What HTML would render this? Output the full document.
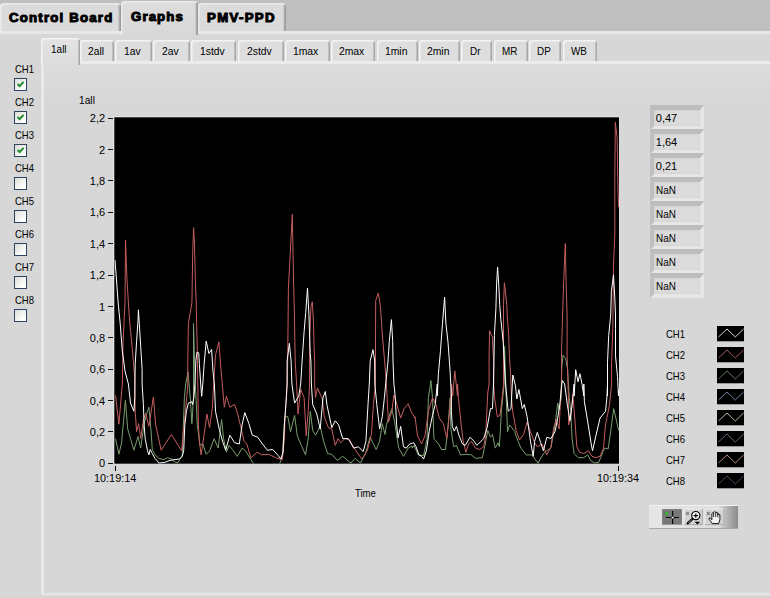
<!DOCTYPE html>
<html><head><meta charset="utf-8"><title>Graphs</title>
<style>
html,body{margin:0;padding:0}
body{width:770px;height:598px;overflow:hidden;background:#bfbfbf;position:relative;font-family:"Liberation Sans",sans-serif;font-size:11px;color:#000}
div,svg,span{position:absolute;box-sizing:border-box}
.t{white-space:nowrap;line-height:13px;height:13px;transform-origin:0 0;font-size:11px}
.b{white-space:nowrap;line-height:17px;height:17px;transform-origin:0 0;font-size:12px;font-weight:bold;-webkit-text-stroke:1px #000;z-index:5}
.ot{top:3px;height:29px;background:#dbdbdb;border-radius:4px 4px 0 0;box-shadow:inset 1px 1px 0 #e9e9e9,inset 2px 2px 0 #e4e4e4,inset -1px 0 0 #9c9c9c,inset -2px 0 0 #adadad,inset -3px 0 0 #c8c8c8}
.ot.sel{top:0.5px;height:34.5px;background:linear-gradient(#dedede,#d8d8d8);z-index:3}
#outer{left:0;top:31px;width:790px;height:600px;background:#d7d7d7;border-top:3px solid #e7e7e7;}
.it{top:40px;height:22px;background:#dedede;border-radius:3px 3px 0 0;box-shadow:inset 1px 1px 0 #f3f3f3,inset 2px 2px 0 #e9e9e9,inset -1px 0 0 #a8a8a8,inset -2px 0 0 #bebebe}
.it.sel{top:37.5px;height:27px;left:40.5px;width:39px;background:linear-gradient(#e3e3e3,#dcdcdc);z-index:3}
#inner{left:40.5px;top:61px;width:760px;height:532.5px;background:linear-gradient(#dcdcdc,#d7d7d7 40px);border-top:3px solid #ececec;border-left:3.5px solid #e9e9e9}
#ib{left:42px;top:593px;width:740px;height:6px;background:linear-gradient(#e7e7e7 0,#e4e4e4 2px,#d4d4d4 3px)}
.cb{width:13px;height:13px;border:1px solid #2c4562;background:linear-gradient(135deg,#dcdcd6,#fff 80%)}
.cb svg{left:0;top:0}
.ind{left:650px;width:54px;height:25px;background:#dbdbdb;border:solid;border-width:5px 4px 4px 4px;border-color:#bcbcbc #e6e6e6 #e6e6e6 #c0c0c0;box-shadow:inset 0 0 0 0.5px #d0d0d0}
.lg{left:716.5px}
.tk{left:108px;width:5px;height:1px;background:#111}
</style></head><body>
<div class="ot" style="left:0;width:121px"></div>
<div class="ot sel" style="left:121px;width:77px"></div>
<div class="ot" style="left:198px;width:88px"></div>
<span class="b" style="left:8.60px;top:9.70px;letter-spacing:1.10px;transform:scaleX(1.1);">Control Board</span>
<span class="b" style="left:131.10px;top:8.50px;letter-spacing:1.02px;transform:scaleX(1.1);">Graphs</span>
<span class="b" style="left:207.00px;top:9.70px;letter-spacing:1.22px;transform:scaleX(1.1);">PMV-PPD</span>
<div id="outer"></div>
<span class="t" style="left:14.90px;top:62.80px;transform:scaleX(0.865);">CH1</span><div class="cb" style="left:14px;top:78px"><svg width="11" height="11" viewBox="0 0 11 11"><path d="M2.6 5 L4.6 7.1 L8.6 2.9" fill="none" stroke="#208a2c" stroke-width="2.1"/></svg></div><span class="t" style="left:14.90px;top:95.80px;transform:scaleX(0.865);">CH2</span><div class="cb" style="left:14px;top:111px"><svg width="11" height="11" viewBox="0 0 11 11"><path d="M2.6 5 L4.6 7.1 L8.6 2.9" fill="none" stroke="#208a2c" stroke-width="2.1"/></svg></div><span class="t" style="left:14.90px;top:128.80px;transform:scaleX(0.865);">CH3</span><div class="cb" style="left:14px;top:144px"><svg width="11" height="11" viewBox="0 0 11 11"><path d="M2.6 5 L4.6 7.1 L8.6 2.9" fill="none" stroke="#208a2c" stroke-width="2.1"/></svg></div><span class="t" style="left:14.90px;top:161.80px;transform:scaleX(0.865);">CH4</span><div class="cb" style="left:14px;top:177px"></div><span class="t" style="left:14.90px;top:194.80px;transform:scaleX(0.865);">CH5</span><div class="cb" style="left:14px;top:210px"></div><span class="t" style="left:14.90px;top:227.80px;transform:scaleX(0.865);">CH6</span><div class="cb" style="left:14px;top:243px"></div><span class="t" style="left:14.90px;top:260.80px;transform:scaleX(0.865);">CH7</span><div class="cb" style="left:14px;top:276px"></div><span class="t" style="left:14.90px;top:293.80px;transform:scaleX(0.865);">CH8</span><div class="cb" style="left:14px;top:309px"></div>
<div class="it" style="left:80px;width:34px"></div><span class="t" style="left:88.36px;top:45.00px;transform:scaleX(0.940);">2all</span><div class="it" style="left:115px;width:36.5px"></div><span class="t" style="left:123.88px;top:45.00px;transform:scaleX(0.940);">1av</span><div class="it" style="left:152.5px;width:37.5px"></div><span class="t" style="left:161.88px;top:45.00px;transform:scaleX(0.940);">2av</span><div class="it" style="left:190.5px;width:45.5px"></div><span class="t" style="left:199.86px;top:45.00px;transform:scaleX(0.940);">1stdv</span><div class="it" style="left:237.5px;width:46.0px"></div><span class="t" style="left:247.11px;top:45.00px;transform:scaleX(0.940);">2stdv</span><div class="it" style="left:284.5px;width:45.0px"></div><span class="t" style="left:293.32px;top:45.00px;transform:scaleX(0.940);">1max</span><div class="it" style="left:330.5px;width:44.5px"></div><span class="t" style="left:339.07px;top:45.00px;transform:scaleX(0.940);">2max</span><div class="it" style="left:376.5px;width:41.0px"></div><span class="t" style="left:385.05px;top:45.00px;transform:scaleX(0.940);">1min</span><div class="it" style="left:418.5px;width:41.0px"></div><span class="t" style="left:427.05px;top:45.00px;transform:scaleX(0.940);">2min</span><div class="it" style="left:461px;width:31px"></div><span class="t" style="left:470.33px;top:45.00px;transform:scaleX(0.900);">Dr</span><div class="it" style="left:493.5px;width:34.0px"></div><span class="t" style="left:501.98px;top:45.00px;transform:scaleX(0.900);">MR</span><div class="it" style="left:529px;width:32px"></div><span class="t" style="left:537.48px;top:45.00px;transform:scaleX(0.900);">DP</span><div class="it" style="left:562.5px;width:34.5px"></div><span class="t" style="left:571.13px;top:45.00px;transform:scaleX(0.900);">WB</span>
<div id="inner"></div><div id="ib"></div>
<div class="it sel"></div>
<span class="t" style="left:50.80px;top:43.00px;transform:scaleX(0.911);z-index:4">1all</span>
<span class="t" style="left:79.20px;top:93.60px;transform:scaleX(0.929);">1all</span>
<span class="t" style="left:89.83px;top:112.40px;transform:scaleX(1.000);">2,2</span><div class="tk" style="top:118px"></div><span class="t" style="left:99.00px;top:143.76px;transform:scaleX(1.000);">2</span><div class="tk" style="top:149px"></div><span class="t" style="left:89.83px;top:175.12px;transform:scaleX(1.000);">1,8</span><div class="tk" style="top:180px"></div><span class="t" style="left:89.83px;top:206.48px;transform:scaleX(1.000);">1,6</span><div class="tk" style="top:212px"></div><span class="t" style="left:89.83px;top:237.84px;transform:scaleX(1.000);">1,4</span><div class="tk" style="top:243px"></div><span class="t" style="left:89.83px;top:269.20px;transform:scaleX(1.000);">1,2</span><div class="tk" style="top:275px"></div><span class="t" style="left:99.00px;top:300.56px;transform:scaleX(1.000);">1</span><div class="tk" style="top:306px"></div><span class="t" style="left:89.83px;top:331.92px;transform:scaleX(1.000);">0,8</span><div class="tk" style="top:337px"></div><span class="t" style="left:89.83px;top:363.28px;transform:scaleX(1.000);">0,6</span><div class="tk" style="top:369px"></div><span class="t" style="left:89.83px;top:394.64px;transform:scaleX(1.000);">0,4</span><div class="tk" style="top:400px"></div><span class="t" style="left:89.83px;top:426.00px;transform:scaleX(1.000);">0,2</span><div class="tk" style="top:431px"></div><span class="t" style="left:99.00px;top:457.36px;transform:scaleX(1.000);">0</span><div class="tk" style="top:463px"></div>
<svg style="left:0;top:0" width="770" height="598" viewBox="0 0 770 598">
<defs><clipPath id="pc"><rect x="114.3" y="117.3" width="504.7" height="346.4"/></clipPath></defs><rect x="113.3" y="116.3" width="506" height="347.6" fill="#e6e6e6"/>
<rect x="114.3" y="117.3" width="504.7" height="346.4" fill="#000"/>
<g fill="none" stroke-width="1" stroke-linejoin="round" clip-path="url(#pc)">
<polyline stroke="#7a9e6e" points="115.5,438.6 118.9,454.3 121.6,442.7 125.4,400.4 127.7,429 130.5,438.6 133.9,450.2 138,436.5 140.7,448.1 144.1,423.6 146.8,413.3 148.9,407.2 150.9,429 152.3,449.5 155,454.9 159.1,458.4 163.9,459.7 167.3,457.7 171.4,459 175.5,462.4 178.2,462.4 182.3,454.9 184.4,397.6 185.7,384 188,372 190.5,401.7 191.9,423.6 193.5,397.6 193.5,323.5 194.3,350.7 195.3,384 197.3,424.9 200,445.4 202.8,444 206.2,454.3 209.6,450.8 213.7,439.9 214.1,438.6 218.2,448.1 221.6,419.5 223.6,438.6 226.4,452.2 229.1,445.4 232.5,449.5 237.3,456.3 242.1,448.1 245.5,450.8 252.3,461.8 254.7,465 278.9,465 282.3,457.7 284.8,416.7 287.8,416.7 290.5,431.7 294.6,415.4 297.3,435.8 301.4,445.4 305.5,454.9 308.2,438.6 310.3,411.3 312.7,430.4 315.5,435.2 320.2,426.3 323.6,441.3 327.7,453.6 331.8,454.3 337.3,460.4 342.7,456.3 350.9,463.1 355,458.4 360.5,463.1 365.9,452.2 370,437.2 372.8,442.7 376.2,449.5 379.6,441.3 382.3,423.6 385,434.5 386.4,424.9 389.8,414 391.9,408.6 394.6,422.2 398.7,448.1 403.5,456.3 408.2,448.1 412.3,446.1 412.3,448.1 414.1,445.4 418.2,454.9 423.6,455.6 427.1,438.6 428.4,397.6 430.5,384 430.9,380.5 432.5,397.6 433.9,438.6 438.6,444 441.4,449.5 445.5,449.5 448.2,424.9 450.2,397.6 450.9,429 453.7,446.8 456.4,445.4 460.5,454.9 465.9,454.3 471.4,454.9 475.5,458.4 482.3,457.7 485,445.4 487.8,430.4 490.5,437.2 492.5,434.5 495.3,448.1 498,442.7 499.4,446.8 501.4,411.3 504.1,384 504.6,346.4 506.2,397.6 507.5,431.7 509.6,424.9 515,431.7 515,433.1 518.2,441.3 520.9,448.1 526.4,454.9 531.8,454.9 538,463.1 543.4,453.6 546.8,450.8 550.9,448.1 555,424.9 557.7,403.1 559.1,409.9 561.2,397.6 561.6,369.6 563,355.2 565.7,358.7 567.7,369.6 569.1,396 570.7,411.3 572.1,438.6 574.1,453.6 578.2,457.7 583.7,457.7 587.8,454.9 590.5,460.4 594.6,463.1 598.7,462.4 602.8,452.2 604.8,448.1 608.2,448.8 611,429 613.7,408.6 618.7,430.4"/>
<polyline stroke="#c45e60" points="115.5,395.6 118.9,424.2 122.3,384 123,343.9 124.3,316.6 125,303 125.5,240 126.9,277.6 128.4,303 129.8,323.5 132.5,350.7 134.6,376.7 135.2,411.3 136.6,431.7 138.6,423.6 140.7,438.6 143.4,419.5 145.7,413.3 148.9,426.3 153.4,397 155.7,424.9 161.2,450.2 171.4,434.5 181.6,450.8 184.4,422.2 187.1,393.5 187.8,384 187.8,357.6 188.4,323.5 191.9,303 192.8,248.9 193.6,227.7 194.5,243.8 195.3,277.6 196.2,303 197.3,350.7 198.4,424.9 199.4,441.3 201.1,454.9 204.1,434.5 206.9,414 209.6,427.7 212.3,408.6 213.7,384 215.5,354.8 218.9,341.9 220.9,368.5 222.3,384 222.3,384 224.3,407.2 226.4,396.3 229.8,407.2 234.6,404.5 237.3,412.6 240.7,426.3 244.1,441.3 246.8,444 250.9,457.7 257.1,452.2 261.8,454.9 268.7,454.3 275.5,457.7 282.3,459.7 284.4,438.6 285,418.1 287.1,384 287.7,361 288.4,288.2 292.3,214.3 293.5,280 294.3,307.3 295.2,361 296.6,384 298,414 300.7,389.5 304.1,397.6 306.2,435.8 308.2,411.3 309.6,384 309.6,343.9 310.9,307.3 312.3,301.8 313.4,320.9 314.3,353.7 314.7,361 314.7,384 315.5,397.6 317.5,388.1 322.3,399 324.3,416.7 328.4,427.7 331.8,429 335.2,445.4 338,438.6 340.7,442.7 344.8,438.6 349.6,439.9 355,449.5 361.8,459 367.3,450.8 371.4,434.5 373.4,404.5 375.5,384 375.5,334.6 375.7,300.5 378.4,293 380.5,307.3 382.5,337.3 384.6,361 386.4,384 388.4,422.2 391.9,411.3 393.9,394.9 397.3,405.8 400.7,418.1 404.1,408.6 408.2,403.8 411.6,412.6 415,418.1 415,416.7 417.5,435.8 421.6,444 425,435.8 428.4,411.3 432.5,397.6 435.9,404.5 439.3,418.1 443.4,423.6 446.8,438.6 449.6,411.3 451.6,384 452.7,396 454.8,370.9 457.5,396 457.5,384 458.4,397.6 461.2,424.9 463.2,441.3 465.9,452.2 468.7,444 471.4,441.3 475.5,448.1 479.6,449.5 483.7,446.8 485.7,435.8 487.8,392.2 489.1,384 489.1,355.9 489.6,330.7 492.3,336.8 493.7,362.7 493.7,384 494.6,397.6 497.3,416.7 500,415.4 502.1,397.6 503.5,384 503.5,328.6 503.5,304.6 504.4,282.7 505.8,295 506.8,304.6 507.5,320.9 508.5,331 508.7,335.5 509.4,355.9 510.7,376.4 511.4,396 512.7,411.3 516.1,430.4 519.5,439.9 523.6,434.5 527.1,422.2 530.5,431.7 534.6,442.7 537.3,446.8 542.1,444 546.8,454.9 550.9,446.8 553.7,427.7 556.4,419.5 559.1,429 560.8,394.9 561.6,384 561.6,349.1 562.6,315 563.7,281.7 565.3,243.5 566.1,281.7 567.1,315 567.1,355.9 567.7,376.4 568.4,396 568.4,411.3 568.7,424.9 571.4,411.3 572.8,394.9 574.8,418.1 576.8,446.8 579.6,452.2 583.7,453.6 588.4,450.8 591.9,456.3 595.9,457.7 600,456.3 603.5,448.1 605.5,424.9 609.6,404.5 611.6,384 611.6,362.7 612.8,328.6 613.5,265.4 614.8,234 614.8,180 615.3,122.3 617.1,137.3 618,191 618.7,207"/>
<polyline stroke="#ffffff" points="115,260 118.2,303 120.2,323.5 122.3,350.7 125,371.2 128.4,384 130.5,403.1 133.9,411.3 134.8,397.6 135.2,364.4 136.6,341.2 138,320.7 138.4,309.8 139.3,323.5 140.7,346.7 142.1,368.5 142.1,384 143.4,404.5 144.1,424.9 145.2,438.6 147.5,450.8 148.9,454.9 150.2,449.5 152.3,453.6 155,458.4 159.1,463.1 164.6,462.4 170,460.4 174.1,459.7 179.6,459 182.3,456.3 183.7,450.8 184.8,424.9 186.4,411.3 188.4,403.1 191.9,401.7 192.5,404.5 193.9,397.6 194.9,384 195.9,360.3 197,352.1 198.7,352.8 199.4,364.4 200.7,384 201.7,396.3 202.8,384 204.1,364.4 206.2,341.2 208.9,353.5 211.6,349.4 213,371.2 214.4,384 214.4,384 215.5,411.3 219.5,430.4 223,442.7 225.7,450.2 229.8,435.2 234.6,442.7 239.3,444 242.1,424.9 244.8,412.6 248.9,423.6 252.3,435.2 257.7,437.2 262.5,444 267.3,450.2 272.8,449.5 278.2,455.6 280.9,459 283,452.2 284.4,424.9 286.4,397.6 287.1,384 287.1,361 289.4,343.4 291.1,361 291.9,384 294.6,403.1 298.7,396.3 300.7,384 302.1,361 304.1,331.8 305.7,312.7 307.5,288.2 308.9,314.1 310.2,353.7 310.9,361 311.4,384 312.7,404.5 316.8,414 320.2,429 323,397.6 325.3,391.5 327.1,405.8 331.8,427.7 335.2,420.8 338.6,424.9 342.7,438.6 348.2,438.6 353.7,448.1 358.4,446.8 363.2,451.5 365.9,441.3 368,404.5 369.3,384 370.2,361 373,349.6 374.7,361 374.8,384 376.8,404.5 379.6,429 382.3,416.7 384.4,397.6 385.7,384 388,361 389.3,341.4 391.4,319.6 392.7,341.4 393,361 393.9,384 395.3,397.6 396.6,424.9 398,437.9 400.7,426.3 403.5,446.8 406.2,448.1 409.6,444 413.7,442.7 413.7,442.7 416.1,446.8 418.9,454.9 421.6,456.3 423.6,459 426.4,450.8 429.1,431.7 432.5,415.4 435.2,404.5 437.3,384 437.3,396 438.4,373.7 440.5,350.5 442.5,323.2 444.6,297 445.9,323.2 448,342.3 450,369.6 451.4,396 451.4,411.3 452.3,426.3 454.3,431.1 456.4,426.3 459.1,435.8 462.5,444 465.3,445.4 470,437.2 474.1,441.3 476.8,445.4 483.7,438.6 487.1,427.7 490.5,408.6 492.5,408.6 493.5,384 494.4,335.5 495.9,308.7 496.6,284.1 497.6,267.1 498.7,284.1 499.7,304.6 500.7,318.2 502.1,331 503.2,342.3 505.5,384 508.2,411.3 511,408.6 512.3,384 512.8,375 515.5,385.9 516.8,399 518.9,389.5 522.3,408.6 524.3,404.5 527.1,416.7 530.5,441.3 533.2,456.3 534.6,441.3 537.3,432.4 540.7,442.7 543.4,450.8 546.8,437.2 550.9,438.6 555,431.7 557.7,418.1 559.8,404.5 561.8,384 562.3,380.5 564.6,384 567.3,404.5 570,420.8 572.1,404.5 574.1,384 574.1,396 575.7,369.6 578,381.8 580,373.7 582.1,384.6 583.8,396 583.8,384 584.4,401.7 587.8,422.2 591.2,444 592.5,450.8 595.9,435.8 600,418.1 605.5,411.3 606.9,397.6 607.5,384 607.5,396 607.5,362.7 608.7,335.5 610.7,315 611.4,291.3 613.5,274.9 614.8,298.1 615.5,315 615.5,328.6 615.5,355.9 617.5,376.4 618.5,396 618.7,389.5"/>
</g>
<rect x="115" y="466" width="1" height="5" fill="#000"/>
<rect x="618" y="466" width="1" height="5" fill="#000"/>
</svg>
<span class="t" style="left:93.60px;top:471.70px;transform:scaleX(0.988);">10:19:14</span>
<span class="t" style="left:596.80px;top:471.70px;transform:scaleX(0.981);">10:19:34</span>
<span class="t" style="left:355.40px;top:486.80px;transform:scaleX(0.870);">Time</span>
<div class="ind" style="top:105px"></div><span class="t" style="left:655.80px;top:112.20px;transform:scaleX(1.000);">0,47</span><div class="ind" style="top:129px"></div><span class="t" style="left:655.80px;top:136.20px;transform:scaleX(1.000);">1,64</span><div class="ind" style="top:153px"></div><span class="t" style="left:655.80px;top:160.20px;transform:scaleX(1.000);">0,21</span><div class="ind" style="top:177px"></div><span class="t" style="left:655.80px;top:184.20px;transform:scaleX(0.900);">NaN</span><div class="ind" style="top:201px"></div><span class="t" style="left:655.80px;top:208.20px;transform:scaleX(0.900);">NaN</span><div class="ind" style="top:225px"></div><span class="t" style="left:655.80px;top:232.20px;transform:scaleX(0.900);">NaN</span><div class="ind" style="top:249px"></div><span class="t" style="left:655.80px;top:256.20px;transform:scaleX(0.900);">NaN</span><div class="ind" style="top:273px"></div><span class="t" style="left:655.80px;top:280.20px;transform:scaleX(0.900);">NaN</span>
<span class="t" style="left:665.80px;top:327.70px;transform:scaleX(0.865);">CH1</span><svg class="lg" style="top:326.4px" width="27.6" height="15.3" viewBox="0 0 27.6 15.3"><rect width="27.6" height="15.3" fill="#000"/><polyline points="1.5,11 10,3 18.3,11 26.6,3" fill="none" stroke="#ffffff" stroke-width="0.85"/></svg><span class="t" style="left:665.80px;top:348.70px;transform:scaleX(0.865);">CH2</span><svg class="lg" style="top:347.4px" width="27.6" height="15.3" viewBox="0 0 27.6 15.3"><rect width="27.6" height="15.3" fill="#000"/><polyline points="1.5,11 10,3 18.3,11 26.6,3" fill="none" stroke="#c06868" stroke-width="0.85"/></svg><span class="t" style="left:665.80px;top:369.70px;transform:scaleX(0.865);">CH3</span><svg class="lg" style="top:368.4px" width="27.6" height="15.3" viewBox="0 0 27.6 15.3"><rect width="27.6" height="15.3" fill="#000"/><polyline points="1.5,11 10,3 18.3,11 26.6,3" fill="none" stroke="#6c8c66" stroke-width="0.85"/></svg><span class="t" style="left:665.80px;top:390.70px;transform:scaleX(0.865);">CH4</span><svg class="lg" style="top:389.4px" width="27.6" height="15.3" viewBox="0 0 27.6 15.3"><rect width="27.6" height="15.3" fill="#000"/><polyline points="1.5,11 10,3 18.3,11 26.6,3" fill="none" stroke="#8496b8" stroke-width="0.85"/></svg><span class="t" style="left:665.80px;top:411.70px;transform:scaleX(0.865);">CH5</span><svg class="lg" style="top:410.4px" width="27.6" height="15.3" viewBox="0 0 27.6 15.3"><rect width="27.6" height="15.3" fill="#000"/><polyline points="1.5,11 10,3 18.3,11 26.6,3" fill="none" stroke="#dcd6b4" stroke-width="0.85"/></svg><span class="t" style="left:665.80px;top:432.70px;transform:scaleX(0.865);">CH6</span><svg class="lg" style="top:431.4px" width="27.6" height="15.3" viewBox="0 0 27.6 15.3"><rect width="27.6" height="15.3" fill="#000"/><polyline points="1.5,11 10,3 18.3,11 26.6,3" fill="none" stroke="#84728e" stroke-width="0.85"/></svg><span class="t" style="left:665.80px;top:453.70px;transform:scaleX(0.865);">CH7</span><svg class="lg" style="top:452.4px" width="27.6" height="15.3" viewBox="0 0 27.6 15.3"><rect width="27.6" height="15.3" fill="#000"/><polyline points="1.5,11 10,3 18.3,11 26.6,3" fill="none" stroke="#d4a48a" stroke-width="0.85"/></svg><span class="t" style="left:665.80px;top:474.70px;transform:scaleX(0.865);">CH8</span><svg class="lg" style="top:473.4px" width="27.6" height="15.3" viewBox="0 0 27.6 15.3"><rect width="27.6" height="15.3" fill="#000"/><polyline points="1.5,11 10,3 18.3,11 26.6,3" fill="none" stroke="#50587c" stroke-width="0.85"/></svg>
<div id="tb" style="left:649px;top:505px;width:89px;height:24px;background:linear-gradient(90deg,#e6e6e6 0,#dedede 78%,#b4b4b4 88%,#8a8a8a 100%);border-top:1px solid #f2f2f2;border-bottom:1px solid #a8a8a8"></div>
<svg style="left:649px;top:505px" width="89" height="24" viewBox="0 0 89 24">
<rect x="13.1" y="4.1" width="19.8" height="15.6" fill="#787878"/>
<path d="M23.6 5.9V18.9M16.9 12.5H29.9" stroke="#000" stroke-width="1.1" fill="none"/><circle cx="23.6" cy="12.5" r="1.3" fill="#fff" stroke="#000" stroke-width="0.6"/><rect x="15.9" y="6.7" width="3.6" height="3.6" fill="#4a6a4a"/><rect x="16.4" y="7.2" width="2.6" height="2.6" fill="#3cc43c"/>
<rect x="35.1" y="4.1" width="18.3" height="15.6" fill="#d2d2d2"/><path d="M35.1 19.7V4.1H53.4" stroke="#efefef" fill="none"/><path d="M35.1 19.7H53.4V4.1" stroke="#a8a8a8" fill="none"/>
<circle cx="46.8" cy="10.6" r="4.1" fill="#f6f6f6" stroke="#000" stroke-width="1.2"/><path d="M44.6 10.6h4.4M46.8 8.4v4.4" stroke="#000" stroke-width="1.1"/><path d="M43.6 13.9L38.6 18.3" stroke="#000" stroke-width="2.2" stroke-linecap="round"/><path d="M42.6 14.8L39.2 17.8" stroke="#c8c8c8" stroke-width="0.7"/><path d="M45.6 16.7h5.6l-2.8 2.8z" fill="#000"/><rect x="37" y="7" width="3" height="3" fill="#8c8c8c"/>
<rect x="55.9" y="4.1" width="19.2" height="15.6" fill="#d2d2d2"/><path d="M55.9 19.7V4.1H75.1" stroke="#efefef" fill="none"/><path d="M55.9 19.7H75.1V4.1" stroke="#a8a8a8" fill="none"/>
<path d="M63.4 18.6L60.2 14.4Q59.6 12.8 61 12.9L62.9 14.7V8.6Q63.7 7.3 64.6 8.6V7.4Q65.6 6 66.7 7.4V7.9Q67.8 6.7 68.8 7.9V9.7Q69.9 8.8 70.9 9.9V14.6L69.7 18.6Z" fill="#f2f2f2" stroke="#000" stroke-width="0.9" stroke-linejoin="round"/><path d="M64.6 8.6V12M66.7 7.6V12M68.8 8.2V12.2" stroke="#000" stroke-width="0.8" fill="none"/><rect x="57.8" y="7" width="3" height="3" fill="#8c8c8c"/>
</svg>
</body></html>
